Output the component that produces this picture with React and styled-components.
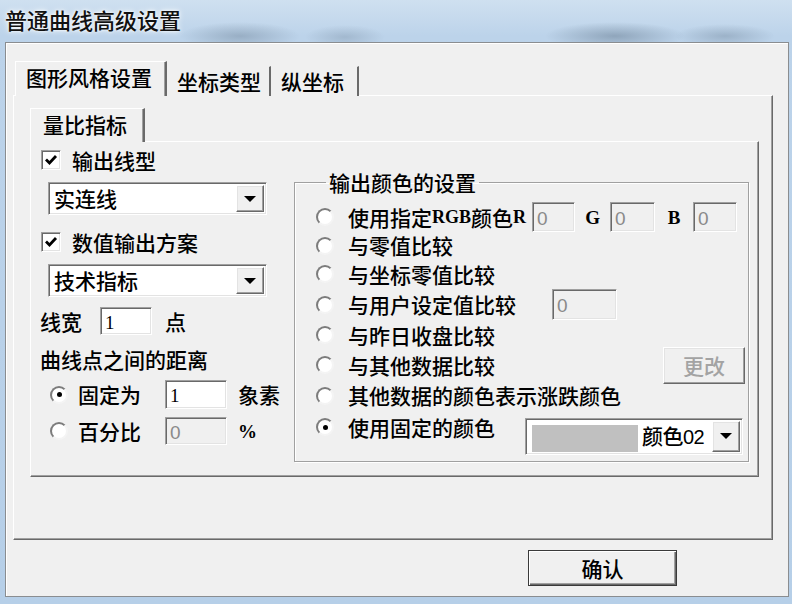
import React from "react";
import styled, { createGlobalStyle, css } from "styled-components";

const CJK = `"Noto Sans CJK SC", "Noto Sans", sans-serif`;
const SERIF = `"Liberation Serif", "Noto Sans CJK SC", serif`;

const GlobalStyle = createGlobalStyle`
  html, body {
    margin: 0;
    padding: 0;
  }
  body {
    width: 792px;
    height: 604px;
    overflow: hidden;
    font-family: ${CJK};
    color: #000;
  }
`;

// classic 3d edges
const sunken = css`
  border: 1px solid;
  border-color: #a0a0a0 #ffffff #ffffff #a0a0a0;
  box-shadow: inset 1px 1px 0 #696969, inset -1px -1px 0 #e3e3e3;
`;
const raised = css`
  border: 1px solid;
  border-color: #ffffff #696969 #696969 #ffffff;
  box-shadow: inset -1px -1px 0 #a0a0a0, inset 1px 1px 0 #e3e3e3;
`;

const Frame = styled.div`
  width: 792px;
  height: 604px;
  box-sizing: border-box;
  display: flex;
  flex-direction: column;
  padding: 0 3px 7px 5px;
  background:
    radial-gradient(ellipse 60px 14px at 240px 36px, rgba(70, 90, 110, 0.3), transparent),
    radial-gradient(ellipse 40px 12px at 345px 37px, rgba(70, 90, 110, 0.22), transparent),
    radial-gradient(ellipse 70px 14px at 615px 36px, rgba(60, 80, 100, 0.35), transparent),
    radial-gradient(ellipse 50px 12px at 725px 36px, rgba(60, 80, 100, 0.25), transparent),
    linear-gradient(180deg, #cfe0f0 0%, #bcd3ea 6%, #b6cfe8 100%);
`;

const TitleBar = styled.div`
  height: 42px;
  display: flex;
  align-items: center;
  padding-bottom: 4px;
  box-sizing: border-box;
  font: 500 22px/1 ${CJK};
  color: #111;
  text-shadow: 0 0 6px #ffffff, 0 0 3px #ffffff;
`;

const Client = styled.div`
  flex: 1;
  box-sizing: border-box;
  background: #f0f0f0;
  border: 1px solid #8a8d90;
  box-shadow: inset 1px 1px 0 #ffffff;
  padding: 19px 0 0 7px;
  display: flex;
  flex-direction: column;
`;

const TabStrip = styled.div`
  display: flex;
  align-items: flex-end;
  height: ${(p) => p.$h}px;
  padding-left: ${(p) => p.$pl}px;
  margin-bottom: -1px;
  position: relative;
  z-index: 1;
`;

const Tab = styled.div`
  box-sizing: border-box;
  width: ${(p) => p.$w}px;
  height: ${(p) => (p.$active ? p.$h + 1 : p.$h - 4)}px;
  padding-left: ${(p) => p.$pl || 9}px;
  padding-bottom: ${(p) => (p.$active ? 3 : 0)}px;
  display: flex;
  align-items: center;
  font: 500 21px/1 ${CJK};
  background: #f0f0f0;
  border-top: 1px solid ${(p) => (p.$active ? "#ffffff" : "#f0f0f0")};
  border-left: 1px solid ${(p) => (p.$active ? "#ffffff" : "#f0f0f0")};
  border-right: 2px solid #6a6a6a;
  box-shadow: ${(p) => (p.$active ? "inset -1px 0 0 #a0a0a0" : "none")};
`;

const TabPanel = styled.div`
  box-sizing: border-box;
  width: 760px;
  height: 445px;
  border: 1px solid;
  border-color: #ffffff #696969 #696969 #ffffff;
  box-shadow: inset -1px -1px 0 #a0a0a0;
  padding: 13px 0 0 16px;
  display: flex;
  flex-direction: column;
`;

const InnerPanel = styled.div`
  box-sizing: border-box;
  width: 729px;
  height: 336px;
  border: 1px solid;
  border-color: #ffffff #696969 #696969 #ffffff;
  box-shadow: inset -1px -1px 0 #a0a0a0;
  display: flex;
  align-items: flex-start;
`;

const LeftCol = styled.div`
  width: 263px;
  flex-shrink: 0;
  display: flex;
  flex-direction: column;
  padding-top: 8px;
`;

const CheckRow = styled.label`
  display: flex;
  align-items: center;
  height: 20px;
  margin-top: ${(p) => p.$mt || 0}px;
  padding-left: 10px;
  gap: 11px;
  font: 500 21px/1 ${CJK};
`;

const CheckBox = styled.span`
  width: 20px;
  height: 20px;
  box-sizing: border-box;
  ${sunken};
  background: #fff;
  display: flex;
  align-items: center;
  justify-content: center;
`;

const Combo = styled.div`
  box-sizing: border-box;
  width: ${(p) => p.$w}px;
  height: ${(p) => p.$h}px;
  margin-left: ${(p) => p.$ml || 0}px;
  margin-top: ${(p) => p.$mt || 0}px;
  ${sunken};
  background: #fff;
  display: flex;
  align-items: center;
  padding: 2px 2px 2px ${(p) => p.$pl || 5}px;
  font: 500 21px/1 ${CJK};
`;

const ComboText = styled.span`
  flex: 1;
`;

const Swatch = styled.span`
  width: 106px;
  height: 27px;
  margin-top: 5px;
  background: #c0c0c0;
  margin-right: 4px;
`;

const ComboValue = styled.span`
  flex: 1;
  letter-spacing: -0.5px;
  & b {
    font: 20px/1 "Liberation Sans", sans-serif;
  }
`;

const DropButton = styled.span`
  width: 28px;
  height: 100%;
  box-sizing: border-box;
  ${raised};
  background: #f0f0f0;
  display: flex;
  align-items: center;
  justify-content: center;
`;

const FieldRow = styled.div`
  display: flex;
  align-items: center;
  height: ${(p) => p.$h || 28}px;
  margin-top: ${(p) => p.$mt || 0}px;
  padding-left: ${(p) => p.$pl || 0}px;
  font: 500 21px/1 ${CJK};
`;

const TextInput = styled.div`
  box-sizing: border-box;
  width: ${(p) => p.$w}px;
  height: ${(p) => p.$h || 29}px;
  margin-left: ${(p) => p.$ml || 0}px;
  ${sunken};
  background: ${(p) => (p.$disabled ? "#f0f0f0" : "#ffffff")};
  color: ${(p) => (p.$disabled ? "#8a8a8a" : "#000")};
  display: flex;
  align-items: center;
  padding: 2px 0 0 4px;
  font: 19px/1 ${(p) => (p.$disabled ? `"Liberation Sans", sans-serif` : SERIF)};
`;

const Unit = styled.span`
  margin-left: ${(p) => p.$ml || 0}px;
  font: ${(p) => (p.$latin ? `bold 19px/1 ${SERIF}` : `500 21px/1 ${CJK}`)};
`;

const RadioDot = styled.span`
  width: 18px;
  height: 18px;
  flex-shrink: 0;
  box-sizing: border-box;
  border-radius: 50%;
  border: 2px solid;
  border-color: #7c7c7c #f4f4f4 #f4f4f4 #7c7c7c;
  background: #fff;
  display: flex;
  align-items: center;
  justify-content: center;
  margin-right: ${(p) => p.$gap}px;
  &::after {
    content: "";
    width: 5px;
    height: 5px;
    border-radius: 50%;
    background: ${(p) => (p.$on ? "#000" : "transparent")};
  }
`;

const Group = styled.fieldset`
  box-sizing: border-box;
  width: 455px;
  height: 291px;
  margin: 29px 0 0 0;
  padding: 9px 0 0 21px;
  border: 1px solid #a0a0a0;
  box-shadow: 1px 1px 0 #ffffff, inset 1px 1px 0 #ffffff;
  display: flex;
  flex-direction: column;
`;

const Legend = styled.legend`
  margin-left: 10px;
  padding: 0 3px;
  height: 22px;
  font: 500 21px/22px ${CJK};
`;

const GroupRow = styled.div`
  display: flex;
  align-items: center;
  height: ${(p) => p.$h || 30}px;
  font: 500 21px/1 ${CJK};
`;

const Latin = styled.span`
  font: bold 18px/1 ${SERIF};
`;

const ChanLabel = styled.span`
  width: ${(p) => p.$w}px;
  text-align: center;
  font: bold 19px/1 ${SERIF};
`;

const PushButton = styled.div`
  box-sizing: border-box;
  width: ${(p) => p.$w}px;
  height: ${(p) => p.$h}px;
  margin-left: ${(p) => p.$ml || 0}px;
  ${raised};
  ${(p) =>
    p.$default &&
    css`
      border: 1px solid #3a3a3a;
      box-shadow: inset 1px 1px 0 #ffffff, inset -1px -1px 0 #696969,
        inset -2px -2px 0 #a0a0a0;
    `}
  background: #f0f0f0;
  color: ${(p) => (p.$disabled ? "#a3a3a3" : "#000")};
  display: flex;
  align-items: center;
  justify-content: center;
  font: 500 21px/1 ${CJK};
`;

const Footer = styled.div`
  display: flex;
  padding: 10px 0 0 515px;
`;

const Arrow = () => (
  <svg width="12" height="6" viewBox="0 0 12 6">
    <polygon points="0,0 12,0 6,6" fill="#000" />
  </svg>
);

const Check = () => (
  <svg width="14" height="14" viewBox="0 0 14 14">
    <path d="M2 6.5 L5.5 10 L12 3" fill="none" stroke="#000" strokeWidth="2.8" />
  </svg>
);

const Radio = ({ on, gap = 10 }) => <RadioDot $on={on} $gap={gap} />;

export default function App() {
  return (
    <Frame>
      <GlobalStyle />
      <TitleBar>普通曲线高级设置</TitleBar>
      <Client>
        <TabStrip $h={34} $pl={2}>
          <Tab $active $w={152} $h={34} $pl={10}>图形风格设置</Tab>
          <Tab $w={104} $h={34}>坐标类型</Tab>
          <Tab $w={88} $h={34}>纵坐标</Tab>
        </TabStrip>
        <TabPanel>
          <TabStrip $h={33} $pl={0}>
            <Tab $active $w={115} $h={33} $pl={12}>量比指标</Tab>
          </TabStrip>
          <InnerPanel>
            <LeftCol>
              <CheckRow>
                <CheckBox><Check /></CheckBox>输出线型
              </CheckRow>
              <Combo $w={219} $h={33} $ml={17} $mt={12}>
                <ComboText>实连线</ComboText>
                <DropButton><Arrow /></DropButton>
              </Combo>
              <CheckRow $mt={17}>
                <CheckBox><Check /></CheckBox>数值输出方案
              </CheckRow>
              <Combo $w={219} $h={33} $ml={17} $mt={12}>
                <ComboText>技术指标</ComboText>
                <DropButton><Arrow /></DropButton>
              </Combo>
              <FieldRow $mt={10} $pl={9}>
                线宽
                <TextInput $w={52} $h={28} $ml={18}>1</TextInput>
                <Unit $ml={13}>点</Unit>
              </FieldRow>
              <FieldRow $mt={12} $h={24} $pl={9}>曲线点之间的距离</FieldRow>
              <FieldRow $mt={9} $h={29} $pl={19}>
                <Radio on />
                固定为
                <TextInput $w={62} $ml={24}>1</TextInput>
                <Unit $ml={11}>象素</Unit>
              </FieldRow>
              <FieldRow $mt={8} $h={28} $pl={19}>
                <Radio />
                百分比
                <TextInput $w={62} $h={28} $ml={24} $disabled>0</TextInput>
                <Unit $ml={11} $latin>%</Unit>
              </FieldRow>
            </LeftCol>
            <Group>
              <Legend>输出颜色的设置</Legend>
              <GroupRow>
                <Radio gap={14} />
                使用指定<Latin>RGB</Latin>颜色<Latin>R</Latin>
                <TextInput $w={43} $h={30} $ml={6} $disabled>0</TextInput>
                <ChanLabel $w={35}>G</ChanLabel>
                <TextInput $w={45} $h={30} $disabled>0</TextInput>
                <ChanLabel $w={38}>B</ChanLabel>
                <TextInput $w={44} $h={30} $disabled>0</TextInput>
              </GroupRow>
              <GroupRow $h={27}>
                <Radio gap={14} />
                与零值比较
              </GroupRow>
              <GroupRow>
                <Radio gap={14} />
                与坐标零值比较
              </GroupRow>
              <GroupRow $h={31}>
                <Radio gap={14} />
                与用户设定值比较
                <TextInput $w={65} $h={31} $ml={36} $disabled>0</TextInput>
              </GroupRow>
              <GroupRow>
                <Radio gap={14} />
                与昨日收盘比较
              </GroupRow>
              <GroupRow>
                <Radio gap={14} />
                与其他数据比较
                <PushButton $w={82} $h={37} $ml={168} $disabled>更改</PushButton>
              </GroupRow>
              <GroupRow $h={31}>
                <Radio gap={14} />
                其他数据的颜色表示涨跌颜色
              </GroupRow>
              <GroupRow $h={32}>
                <Radio on gap={14} />
                使用固定的颜色
                <Combo $w={218} $h={37} $ml={30} $mt={18} $pl={6}>
                  <Swatch />
                  <ComboValue>颜色<b>02</b></ComboValue>
                  <DropButton><Arrow /></DropButton>
                </Combo>
              </GroupRow>
            </Group>
          </InnerPanel>
        </TabPanel>
        <Footer>
          <PushButton $default $w={149} $h={36}>确认</PushButton>
        </Footer>
      </Client>
    </Frame>
  );
}
